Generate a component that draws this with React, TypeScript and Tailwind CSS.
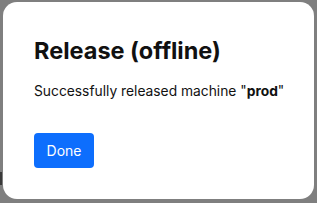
export default function App() {
  return (
    <div className="relative h-[203px] w-[317px] overflow-hidden bg-[#7f7f7f] pl-[3px] pt-[2px]">
      <div className="absolute left-0 top-[172px] h-[13px] w-[2px] bg-[#3a3a3a]" />

      <div
        className="flex h-[197px] w-[311px] flex-col rounded-[14px] bg-white pl-[31px] pt-[33px] text-[#111111]"
        style={{ fontFamily: "Inter, 'Noto Sans', sans-serif" }}
      >
        <h2 className="text-[23.5px] font-bold leading-[32px]">
          Release (offline)
        </h2>

        <p className="mt-[14px] text-[13.8px] leading-[20px]">
          Successfully released machine "<strong className="font-bold">prod</strong>"
        </p>

        <div className="mt-[32px]">
          <button
            type="button"
            className="h-[35px] w-[60px] rounded-[4px] bg-[#0d6efd] text-[14px] text-white"
          >
            Done
          </button>
        </div>
      </div>
    </div>
  );
}
